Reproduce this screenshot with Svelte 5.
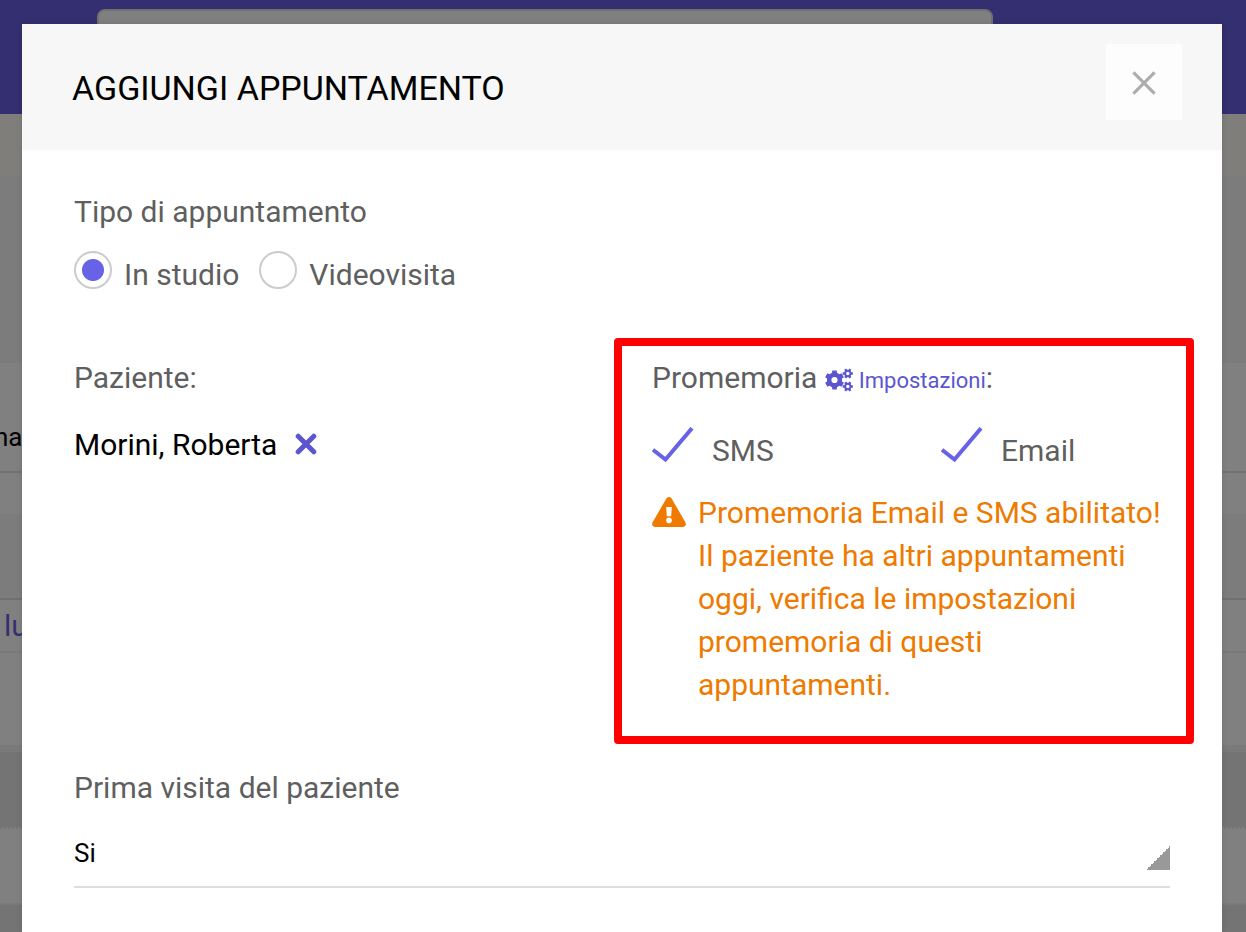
<script>
  let visitType = $state('studio');
  let sms = $state(true);
  let email = $state(true);
  let firstVisit = $state('Si');

  // Outline of a six-toothed gear; the reversed hole is cut by the even-odd rule.
  function gear(cx, cy, outer, inner, hole, start) {
    const pts = [];
    for (let i = 0; i < 6; i++) {
      const a = start + i * 60;
      for (const [d, r] of [[-19, inner], [-13, outer], [13, outer], [19, inner]]) {
        const t = ((a + d) * Math.PI) / 180;
        pts.push(`${(cx + r * Math.cos(t)).toFixed(2)} ${(cy + r * Math.sin(t)).toFixed(2)}`);
      }
    }
    return `M${pts.join('L')}ZM${cx - hole} ${cy}a${hole} ${hole} 0 1 0 ${2 * hole} 0a${hole} ${hole} 0 1 0 ${-2 * hole} 0Z`;
  }

  const gears = [
    gear(9.5, 12, 9.8, 7.6, 3.1, 30),
    gear(22.8, 5.5, 5.2, 3.8, 1.7, 0),
    gear(22.8, 18.5, 5.2, 3.8, 1.7, 0)
  ].join('');
</script>

<div class="page">
  <div class="topbar"><div class="search"></div></div>
  <div class="band warm"></div>
  <div class="band shade"></div>
  <div class="band patient">na</div>
  <div class="band thin"></div>
  <div class="band gap"></div>
  <div class="band day">lu</div>
  <div class="band slot"></div>
  <div class="band edge"></div>
  <div class="band dark"></div>
  <div class="band dotted"></div>
  <div class="band rest"></div>
</div>

<div class="overlay">
  <div class="dialog" role="dialog" aria-labelledby="title">
    <header>
      <h1 id="title">AGGIUNGI APPUNTAMENTO</h1>
      <button class="close" aria-label="Chiudi">
        <svg width="24" height="24" viewBox="0 0 24 24"><path d="M1.4 1.4L22.6 22.6M22.6 1.4L1.4 22.6" stroke="#adadad" stroke-width="3.2" /></svg>
      </button>
    </header>

    <form>
      <fieldset>
        <legend>Tipo di appuntamento</legend>
        <div class="radios">
          <label><input type="radio" name="type" value="studio" bind:group={visitType} />In studio</label>
          <label><input type="radio" name="type" value="video" bind:group={visitType} />Videovisita</label>
        </div>
      </fieldset>

      <div class="columns">
        <div>
          <div class="label">Paziente:</div>
          <div class="name">
            Morini, Roberta
            <button type="button" aria-label="Rimuovi paziente">
              <svg width="22" height="22" viewBox="0 0 22 22"><path d="M3.2 3.2L18.8 18.8M18.8 3.2L3.2 18.8" stroke="#5b56d0" stroke-width="5" stroke-linecap="round" /></svg>
            </button>
          </div>
        </div>

        <div class="reminder">
          <div class="label">
            Promemoria
            <a href="#impostazioni"><svg width="28" height="24" viewBox="0 0 28 24"><path d={gears} fill="currentColor" fill-rule="evenodd" /></svg>Impostazioni</a>:
          </div>
          <div class="checks">
            <label>
              <input type="checkbox" bind:checked={sms} />
              <svg width="42" height="36" viewBox="0 0 42 36"><path d="M1 22.8L13.5 32.5L40 1.2" /></svg>
              SMS
            </label>
            <label>
              <input type="checkbox" bind:checked={email} />
              <svg width="42" height="36" viewBox="0 0 42 36"><path d="M1 22.8L13.5 32.5L40 1.2" /></svg>
              Email
            </label>
          </div>
          <div class="warning">
            <svg width="34" height="30" viewBox="0 0 34 30">
              <path d="M14.4 1.5Q17-1.4 19.6 1.5L33.5 25.5Q34.8 29.6 31 30H3Q-.8 29.6 .5 25.5Z" fill="#ee7a00" />
              <path d="M14.2 10H19.8L19.2 19.3H14.8Z" fill="#fff" />
              <circle cx="17" cy="23.4" r="2.8" fill="#fff" />
            </svg>
            <p>
              Promemoria Email e SMS abilitato!<br />
              Il paziente ha altri appuntamenti<br />
              oggi, verifica le impostazioni<br />
              promemoria di questi<br />
              appuntamenti.
            </p>
          </div>
        </div>
      </div>

      <label class="label" for="first">Prima visita del paziente</label>
      <select id="first" bind:value={firstVisit}>
        <option>Si</option>
        <option>No</option>
      </select>
    </form>
  </div>
</div>

<style>
  :global(body) {
    background: #747474;
    overflow: hidden;
  }

  .page,
  .overlay {
    font-family: Roboto, 'Liberation Sans', sans-serif;
    height: 100vh;
    overflow: hidden;
    box-sizing: border-box;
  }

  .page {
    background: #747474;
  }

  .topbar {
    height: 114px;
    box-sizing: border-box;
    padding: 9px 253px 0 97px;
    background: #332f70;
  }

  .search {
    height: 60px;
    border: 2px solid #707070;
    border-radius: 8px;
    background: #808080;
  }

  .band {
    box-sizing: border-box;
    background: #808080;
  }

  .warm { height: 62px; background: #7f7e7a; }
  .shade { height: 187px; background: #7c7c7c; }
  .patient {
    height: 110px;
    border-bottom: 2px solid #727272;
    text-indent: -6px;
    font-size: 26px;
    line-height: 148px;
    color: #000;
  }
  .thin { height: 41px; }
  .gap { height: 86px; background: #7c7c7c; border-bottom: 2px solid #707070; }
  .day {
    height: 53px;
    border-bottom: 2px solid #7a7a7a;
    padding-left: 4px;
    font-size: 30px;
    line-height: 51px;
    color: #353172;
  }
  .slot { height: 92px; }
  .edge { height: 7px; background: #7a7a7a; }
  .dark { height: 75px; background: #747474; }
  .dotted { height: 76px; border-top: 2px dotted #767676; }
  .rest { height: 2px; background: #7a7a7a; }

  .overlay {
    position: absolute;
    inset: 0;
    display: flex;
    padding: 24px 24px 0 22px;
  }

  .dialog {
    flex: 1;
    background: #fff;
    box-shadow: 0 0 6px rgba(0, 0, 0, 0.12);
    color: #5f5f5f;
    font-size: 30px;
    line-height: 43px;
  }

  header {
    display: flex;
    justify-content: space-between;
    align-items: flex-start;
    padding: 20px 40px 30px 50px;
    background: #f7f7f7;
  }

  h1 {
    margin: 0;
    font-size: 34px;
    line-height: 88px;
    height: 76px;
    font-weight: 400;
    color: #000;
  }

  button {
    display: grid;
    place-items: center;
    padding: 0 0 2px;
    border: 0;
    background: none;
  }

  .close {
    box-sizing: border-box;
    width: 76px;
    height: 76px;
    padding: 2px 0 0;
    background: #fdfdfd;
  }

  svg {
    display: block;
    fill: none;
  }

  form {
    padding: 40px 52px 44px;
  }

  fieldset {
    margin: 0 0 57px;
    padding: 0;
    border: 0;
  }

  legend {
    padding: 0;
  }

  .radios {
    display: flex;
    gap: 20px;
    margin-top: 18px;
  }

  .radios label {
    display: flex;
    align-items: flex-start;
    gap: 12px;
    line-height: 48px;
  }

  input[type='radio'] {
    appearance: none;
    box-sizing: border-box;
    width: 38px;
    height: 38px;
    margin: 0;
    border: 2px solid #ccc;
    border-radius: 50%;
    background: #fff;
  }

  input[type='radio']:checked {
    background: radial-gradient(circle, #6762e6 0 10.5px, #fff 11.5px);
  }

  .columns {
    display: grid;
    grid-template-columns: 1fr 1fr;
    gap: 60px;
    margin-bottom: 60px;
  }

  .label {
    display: block;
  }

  .name {
    display: flex;
    align-items: center;
    gap: 18px;
    margin-top: 24px;
    color: #000;
  }

  .reminder {
    position: relative;
  }

  .reminder::after {
    content: '';
    position: absolute;
    inset: -18px -24px -38px -38px;
    border: 8px solid #f00;
    border-radius: 4px;
    pointer-events: none;
  }

  .reminder .label {
    height: 43px;
    white-space: nowrap;
  }

  a {
    font-size: 22px;
    color: #5b56d0;
    text-decoration: none;
  }

  a svg {
    display: inline-block;
    margin-right: 6px;
    vertical-align: -4px;
  }

  .checks {
    display: grid;
    grid-template-columns: 1fr 1fr;
    gap: 60px;
    margin-top: 28px;
    line-height: 48px;
  }

  .checks label {
    display: grid;
    grid-template-columns: 42px 1fr;
    column-gap: 18px;
    align-items: start;
  }

  .checks input,
  .checks svg {
    grid-area: 1 / 1;
    width: 42px;
    height: 36px;
    margin: 0;
  }

  .checks input {
    opacity: 0;
  }

  .checks path {
    stroke: #6762e6;
    stroke-width: 4;
  }

  .checks input:not(:checked) + svg {
    visibility: hidden;
  }

  .warning {
    display: flex;
    gap: 12px;
    margin-top: 16px;
    color: #ee7a00;
  }

  .warning svg {
    flex: none;
    margin-top: 6px;
  }

  p {
    margin: 0;
    white-space: nowrap;
  }

  select {
    appearance: none;
    display: block;
    width: 100%;
    height: 69px;
    margin-top: 10px;
    padding: 0;
    border: 0;
    border-bottom: 2px solid #ddd;
    border-radius: 0;
    background: linear-gradient(135deg, transparent 50%, #999 50%) right 27px / 24px 24px no-repeat;
    font: 26px Roboto, 'Liberation Sans', sans-serif;
    color: #000;
  }
</style>
